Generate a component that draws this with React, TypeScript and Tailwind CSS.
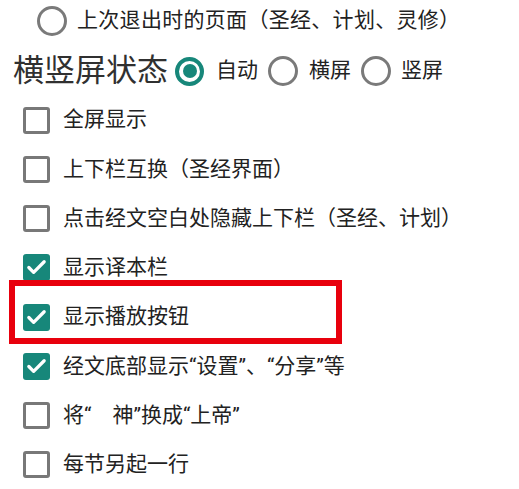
import { Check } from "lucide-react";

const TEAL = "#17877a";

const ROWS: { label: string; checked: boolean }[] = [
  { label: "全屏显示", checked: false },
  { label: "上下栏互换（圣经界面）", checked: false },
  { label: "点击经文空白处隐藏上下栏（圣经、计划）", checked: false },
  { label: "显示译本栏", checked: true },
  { label: "显示播放按钮", checked: true },
  { label: "经文底部显示“设置”、“分享”等", checked: true },
  { label: "将“\u3000神”换成“上帝”", checked: false },
  { label: "每节另起一行", checked: false },
];

function Radio({ on }: { on?: boolean }) {
  return on ? (
    <span className="flex size-[29px] shrink-0 items-center justify-center rounded-full border-[4px] border-[#17877a]">
      <span className="size-[14px] rounded-full bg-[#17877a]" />
    </span>
  ) : (
    <span className="size-[30px] shrink-0 rounded-full border-[3.5px] border-[#7a7a7a]" />
  );
}

function Box({ on }: { on: boolean }) {
  return on ? (
    <span
      className="flex size-[27px] shrink-0 items-center justify-center rounded-[3px]"
      style={{ backgroundColor: TEAL }}
    >
      <Check className="size-[23px] text-white" strokeWidth={3.4} />
    </span>
  ) : (
    <span className="size-[27px] shrink-0 rounded-[3px] border-[3px] border-[#787878]" />
  );
}

export default function App() {
  return (
    <div className="relative h-[489px] w-[519px] overflow-hidden bg-white font-['Roboto','Noto_Sans_CJK_SC',sans-serif] text-[21px] text-[#222]">
      <div className="flex h-[41px] items-center gap-[10px] pl-[37px]">
        <Radio />
        <span className="tracking-[0.3px]">上次退出时的页面（圣经、计划、灵修）</span>
      </div>

      <div className="flex h-[54.4px] items-center pl-[13px] pt-[6px]">
        <span className="mr-[7px] text-[31px] text-[#303030]">横竖屏状态</span>
        <Radio on />
        <span className="ml-[12px] mr-[10px]">自动</span>
        <Radio />
        <span className="ml-[11px] mr-[10px]">横屏</span>
        <Radio />
        <span className="ml-[10px]">竖屏</span>
      </div>

      <div className="flex flex-col">
        {ROWS.map((r) => (
          <div key={r.label} className="flex h-[49.25px] items-center gap-[13px] pl-[23px]">
            <Box on={r.checked} />
            <span>{r.label}</span>
          </div>
        ))}
      </div>

      {/* highlight frame */}
      <div className="absolute left-[9px] top-[280px] h-[64px] w-[333px] border-[6px] border-[#e8000d]" />
    </div>
  );
}
